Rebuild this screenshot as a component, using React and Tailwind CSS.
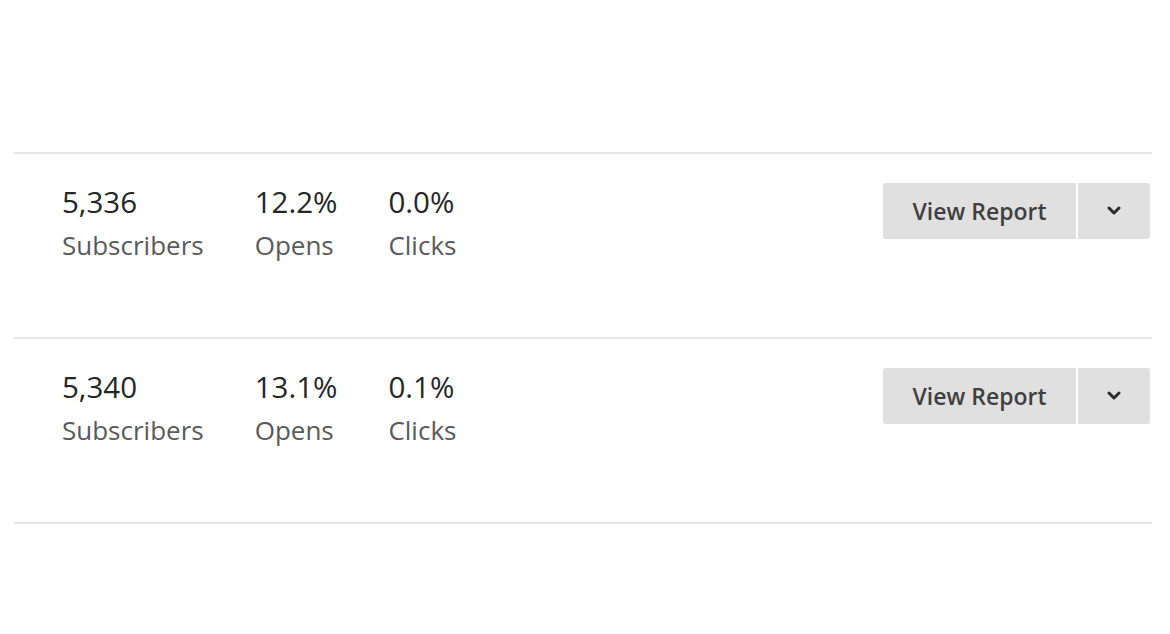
const rows = [
  { subs: '5,336', opens: '12.2%', clicks: '0.0%' },
  { subs: '5,340', opens: '13.1%', clicks: '0.1%' },
];

function Stat({ value, label }) {
  return (
    <div className="flex flex-col">
      <span className="text-[29.5px] leading-[36px] text-[#262626]">{value}</span>
      <span className="mt-[7px] text-[26px] leading-[36px] text-[#5a5a5a]">{label}</span>
    </div>
  );
}

export default function App() {
  return (
    <div
      className="w-[1170px] h-[634px] bg-white pt-[152px] pl-[14px] pr-[18px]"
      style={{ fontFamily: '"Open Sans", sans-serif' }}>
      {rows.map((r, i) => (
        <div
          key={i}
          className="h-[185px] border-t-2 border-[#e6e6e6] flex items-start justify-between pt-[29px] pl-[48px] pr-[2px]">
          <div className="flex gap-[51px] pt-[1px]">
            <Stat value={r.subs} label="Subscribers" />
            <Stat value={r.opens} label="Opens" />
            <Stat value={r.clicks} label="Clicks" />
          </div>
          <div className="flex h-[56px]">
            <button className="w-[193px] h-full bg-[#e0e0e0] rounded-l-[3px] text-[23px] font-semibold text-[#404040]">
              View Report
            </button>
            <div className="w-[2px] bg-white" />
            <button className="w-[72px] h-full bg-[#e0e0e0] rounded-r-[3px] flex items-center justify-center">
              <svg width="14" height="10" viewBox="0 0 14 10">
                <polyline points="2,2 7,7 12,2" fill="none" stroke="#2a2a2a" strokeWidth="3" strokeLinecap="round" strokeLinejoin="round" />
              </svg>
            </button>
          </div>
        </div>
      ))}
      <div className="border-t-2 border-[#e6e6e6]" />
    </div>
  );
}
